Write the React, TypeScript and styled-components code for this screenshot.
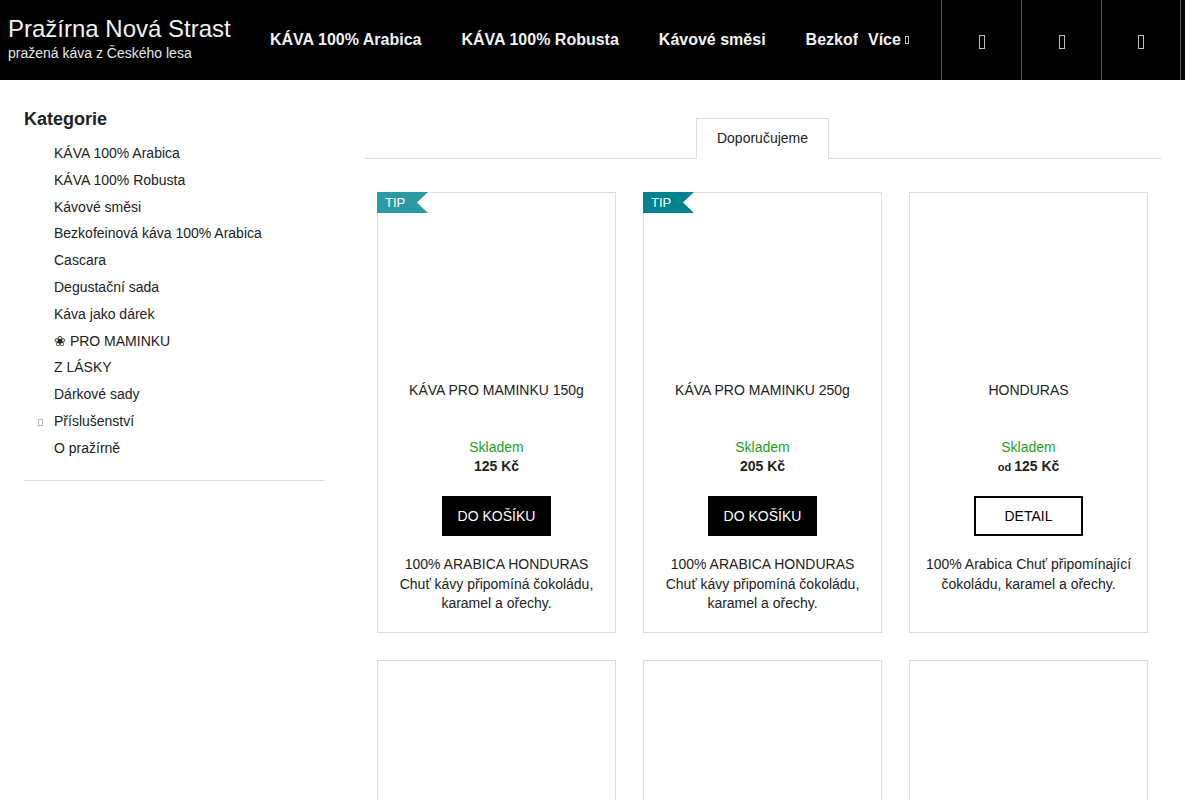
import React from 'react'
import styled, { createGlobalStyle } from 'styled-components'

const GlobalStyle = createGlobalStyle`
  body {
    margin: 0;
    background: #fff;
    font-family: "Liberation Sans", Arial, sans-serif;
    color: #222;
  }
`

const navItems = ['KÁVA 100% Arabica', 'KÁVA 100% Robusta', 'Kávové směsi', 'Bezkofeinová káva 100% Arabica']

const categories = [
    'KÁVA 100% Arabica',
    'KÁVA 100% Robusta',
    'Kávové směsi',
    'Bezkofeinová káva 100% Arabica',
    'Cascara',
    'Degustační sada',
    'Káva jako dárek',
    '❀ PRO MAMINKU',
    'Z LÁSKY',
    'Dárkové sady',
    'Příslušenství',
    'O pražírně',
]

interface Product {
    name: string
    tip?: 'light' | 'dark'
    price: string
    from?: boolean
    detail?: boolean
    text: string[]
}

const products: Product[] = [
    {
        name: 'KÁVA PRO MAMINKU 150g',
        tip: 'light',
        price: '125 Kč',
        text: ['100% ARABICA HONDURAS', 'Chuť kávy připomíná čokoládu,', 'karamel a ořechy.'],
    },
    {
        name: 'KÁVA PRO MAMINKU 250g',
        tip: 'dark',
        price: '205 Kč',
        text: ['100% ARABICA HONDURAS', 'Chuť kávy připomíná čokoládu,', 'karamel a ořechy.'],
    },
    {
        name: 'HONDURAS',
        price: '125 Kč',
        from: true,
        detail: true,
        text: ['100% Arabica Chuť připomínající', 'čokoládu, karamel a ořechy.'],
    },
    {
        name: 'BRAZÍLIE',
        price: '125 Kč',
        from: true,
        detail: true,
        text: ['100% Arabica'],
    },
    {
        name: 'KOLUMBIE',
        price: '135 Kč',
        from: true,
        detail: true,
        text: ['100% Arabica'],
    },
    {
        name: 'ETIOPIE',
        price: '145 Kč',
        from: true,
        detail: true,
        text: ['100% Arabica'],
    },
]

const App = () => {
    return (
        <>
            <GlobalStyle />
            <Header>
                <Brand>
                    <BrandTitle>Pražírna Nová Strast</BrandTitle>
                    <BrandSub>pražená káva z Českého lesa</BrandSub>
                </Brand>
                <NavList>
                    {navItems.map(item => (
                        <NavItem key={item}>{item}</NavItem>
                    ))}
                </NavList>
                <MoreItem>
                    Více <Tofu $w={4} $h={8} />
                </MoreItem>
                <Spacer />
                <IconCells>
                    <IconCell><Tofu $w={6} $h={14} /></IconCell>
                    <IconCell><Tofu $w={6} $h={14} /></IconCell>
                    <IconCell $last><Tofu $w={6} $h={14} /></IconCell>
                </IconCells>
            </Header>

            <Main>
                <Sidebar>
                    <SideTitle>Kategorie</SideTitle>
                    <CatList>
                        {categories.map(cat => (
                            <CatItem key={cat}>
                                {cat === 'Příslušenství' && <CatMarker />}
                                {cat}
                            </CatItem>
                        ))}
                    </CatList>
                    <SideDivider />
                </Sidebar>

                <Content>
                    <TabRow>
                        <Tab>Doporučujeme</Tab>
                    </TabRow>

                    <Grid>
                        {products.map(p => (
                            <Card key={p.name}>
                                {p.tip && <TipBadge $variant={p.tip}>TIP</TipBadge>}
                                <ImageArea />
                                <CardTitle>{p.name}</CardTitle>
                                <Stock>Skladem</Stock>
                                <Price>
                                    {p.from && <From>od </From>}
                                    {p.price}
                                </Price>
                                <ButtonWrap>
                                    <CartButton $outline={p.detail}>{p.detail ? 'DETAIL' : 'DO KOŠÍKU'}</CartButton>
                                </ButtonWrap>
                                <Description>
                                    {p.text.map(line => (
                                        <div key={line}>{line}</div>
                                    ))}
                                </Description>
                            </Card>
                        ))}
                    </Grid>
                </Content>
            </Main>
        </>
    )
}

export default App

const Header = styled.header`
  display: flex;
  align-items: stretch;
  width: 1185px;
  height: 80px;
  background: #000;
  color: #fff;
`

const Brand = styled.div`
  display: flex;
  flex-direction: column;
  width: 250px;
  box-sizing: border-box;
  padding: 15px 0 0 8px;
  flex-shrink: 0;
`

const BrandTitle = styled.div`
  font-size: 24px;
  line-height: 28px;
  color: #f2f2f2;
  white-space: nowrap;
`

const BrandSub = styled.div`
  margin-top: 1px;
  font-size: 14px;
  line-height: 19px;
  color: #e6e6e6;
  white-space: nowrap;
`

const NavList = styled.nav`
  display: flex;
  width: 608px;
  overflow: hidden;
  white-space: nowrap;
  flex-shrink: 0;
`

const NavItem = styled.a`
  padding: 0 20px;
  line-height: 80px;
  font-size: 16px;
  font-weight: bold;
  color: #f2f2f2;
`

const MoreItem = styled.a`
  display: flex;
  align-items: center;
  gap: 4px;
  padding-left: 10px;
  font-size: 16px;
  font-weight: bold;
  color: #f2f2f2;
  white-space: nowrap;
`

const Tofu = styled.span<{ $w: number; $h: number }>`
  display: inline-block;
  width: ${p => p.$w}px;
  height: ${p => p.$h}px;
  box-sizing: border-box;
  border: 1px solid #bdbdbd;
`

const Spacer = styled.div`
  flex: 1;
`

const IconCells = styled.div`
  display: flex;
  margin-right: 4px;
`

const IconCell = styled.div<{ $last?: boolean }>`
  width: 80px;
  display: flex;
  align-items: center;
  justify-content: center;
  padding-top: 4px;
  box-sizing: border-box;
  border-left: 1px solid #5a5a5a;
  border-right: ${p => (p.$last ? '1px solid #5a5a5a' : 'none')};
`

const Main = styled.main`
  display: flex;
  gap: 40px;
  width: 1185px;
  box-sizing: border-box;
  padding: 20px 24px 40px;
`

const Sidebar = styled.aside`
  width: 300px;
  flex-shrink: 0;
`

const SideTitle = styled.h2`
  margin: 8px 0 0;
  font-size: 18px;
  line-height: 22px;
  font-weight: bold;
  color: #222;
`

const CatList = styled.ul`
  list-style: none;
  margin: 10px 0 0;
  padding: 0 0 0 30px;
`

const CatItem = styled.li`
  position: relative;
  font-size: 14px;
  line-height: 26.8px;
  color: #222;
`

const CatMarker = styled.span`
  position: absolute;
  left: -16px;
  top: 11px;
  width: 3px;
  height: 5px;
  border: 1px solid #bbb;
`

const SideDivider = styled.hr`
  margin: 18px 0 0;
  border: none;
  border-top: 1px solid #ddd;
`

const Content = styled.section`
  flex: 1;
  margin-top: 18px;
`

const TabRow = styled.div`
  display: flex;
  justify-content: center;
  border-bottom: 1px solid #ddd;
`

const Tab = styled.div`
  padding: 0 20px;
  line-height: 39px;
  font-size: 14px;
  color: #222;
  background: #fff;
  border: 1px solid #ddd;
  border-bottom: none;
  margin-bottom: -1px;
  padding-bottom: 1px;
`

const Grid = styled.div`
  display: grid;
  grid-template-columns: repeat(3, 239px);
  gap: 27px;
  justify-content: start;
  padding-left: 13px;
  margin-top: 33px;
`

const Card = styled.article`
  position: relative;
  display: flex;
  flex-direction: column;
  box-sizing: border-box;
  border: 1px solid #ddd;
  text-align: center;
  padding-bottom: 18px;
`

const TipBadge = styled.span<{ $variant: 'light' | 'dark' }>`
  position: absolute;
  top: -1px;
  left: -1px;
  width: 51px;
  height: 21px;
  box-sizing: border-box;
  padding-left: 8px;
  font-size: 13px;
  line-height: 21px;
  text-align: left;
  color: #fff;
  background: ${p => (p.$variant === 'light' ? '#2b9aa2' : '#00838f')};
  clip-path: polygon(0 0, 100% 0, 40px 50%, 100% 100%, 0 100%);
`

const ImageArea = styled.div`
  height: 178px;
`

const CardTitle = styled.h3`
  margin: 9px 0 0;
  padding: 0 10px;
  min-height: 40px;
  font-size: 14px;
  line-height: 20px;
  font-weight: normal;
  color: #222;
`

const Stock = styled.div`
  margin-top: 17px;
  font-size: 14px;
  line-height: 20px;
  color: #1f9f1f;
`

const Price = styled.div`
  height: 19px;
  overflow: visible;
  font-size: 14px;
  line-height: 19px;
  font-weight: bold;
  color: #222;
`

const From = styled.span`
  font-size: 11px;
  line-height: 0;
`

const ButtonWrap = styled.div`
  margin-top: 20px;
  display: flex;
  justify-content: center;
`

const CartButton = styled.button<{ $outline?: boolean }>`
  width: 109px;
  height: 40px;
  box-sizing: border-box;
  font-family: "Liberation Sans", Arial, sans-serif;
  font-size: 14px;
  cursor: pointer;
  color: ${p => (p.$outline ? '#000' : '#fff')};
  background: ${p => (p.$outline ? '#fff' : '#000')};
  border: ${p => (p.$outline ? '2px solid #000' : 'none')};
`

const Description = styled.div`
  margin-top: 19px;
  padding: 0 10px;
  font-size: 14px;
  line-height: 19.5px;
  color: #222;
`
